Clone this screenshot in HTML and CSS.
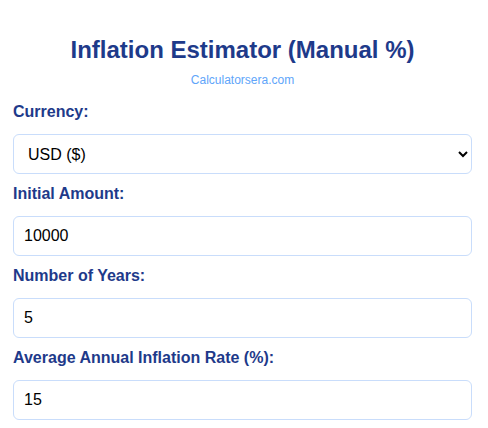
FILE: index.html
```html
<!DOCTYPE html>
<html lang="en">
<head>
<meta charset="utf-8">
<title>Inflation Estimator (Manual %)</title>
<link rel="stylesheet" href="styles.css">
</head>
<body>
<main class="calc">
  <header class="calc-header">
    <h1 class="calc-title">Inflation Estimator (Manual %)</h1>
    <p class="calc-site">Calculatorsera.com</p>
  </header>
  <form class="calc-form">
    <div class="field">
      <label class="field-label" for="currency">Currency:</label>
      <select class="field-control field-select" id="currency">
        <option>USD ($)</option>
        <option>EUR (€)</option>
        <option>GBP (£)</option>
      </select>
    </div>
    <div class="field">
      <label class="field-label" for="amount">Initial Amount:</label>
      <input class="field-control" id="amount" type="number" value="10000">
    </div>
    <div class="field">
      <label class="field-label" for="years">Number of Years:</label>
      <input class="field-control" id="years" type="number" value="5">
    </div>
    <div class="field">
      <label class="field-label" for="rate">Average Annual Inflation Rate (%):</label>
      <input class="field-control" id="rate" type="number" value="15">
    </div>
  </form>
</main>
</body>
</html>
```

FILE: styles.css
```css
html, body {
  margin: 0;
  padding: 0;
  background: #ffffff;
}

body {
  font-family: "Liberation Sans", Arial, sans-serif;
  color: #000000;
}

.calc {
  padding: 36px 16px 0 13px;
}

.calc-header {
  text-align: center;
}

.calc-title {
  margin: 0;
  font-size: 24px;
  line-height: 28px;
  font-weight: bold;
  color: #1e3a8a;
}

.calc-site {
  margin: 9px 0 0;
  font-size: 12px;
  line-height: 14px;
  color: #60a5fa;
}

.calc-form {
  margin-top: 16px;
  display: flex;
  flex-direction: column;
  gap: 11px;
}

.field {
  display: flex;
  flex-direction: column;
}

.field-label {
  display: block;
  font-size: 16px;
  line-height: 18px;
  font-weight: bold;
  color: #1e3a8a;
  margin-bottom: 13px;
}

.field-control {
  box-sizing: border-box;
  width: 100%;
  height: 40px;
  padding: 0 10px;
  border: 1px solid #c9ddfb;
  border-radius: 6px;
  background: #ffffff;
  font-family: "Liberation Sans", Arial, sans-serif;
  font-size: 16px;
  color: #000000;
  outline: none;
}

.field-control::-webkit-outer-spin-button,
.field-control::-webkit-inner-spin-button {
  -webkit-appearance: none;
  margin: 0;
}
```
